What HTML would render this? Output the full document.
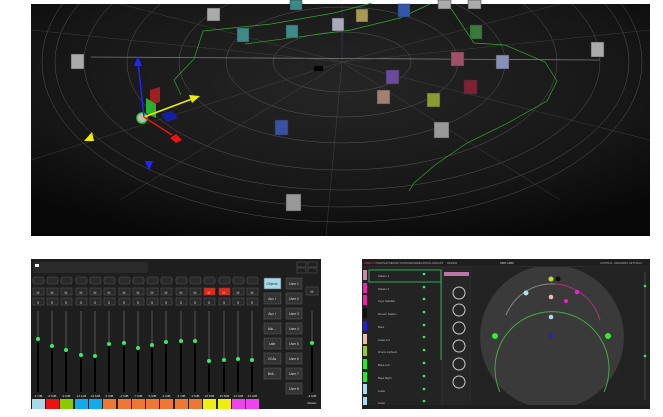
<!DOCTYPE html>
<html><head><meta charset="utf-8"><style>
html,body{margin:0;padding:0;background:#fff;width:663px;height:417px;overflow:hidden;font-family:"Liberation Sans",sans-serif}
svg{position:absolute;left:0;top:0}
</style></head><body>
<svg width="663" height="417" viewBox="0 0 663 417" xmlns="http://www.w3.org/2000/svg" font-family="Liberation Sans, sans-serif">
<defs>
<radialGradient id="bg" cx="0.5" cy="0.35" r="0.7">
<stop offset="0" stop-color="#252525"/><stop offset="0.7" stop-color="#161616"/><stop offset="1" stop-color="#080808"/>
</radialGradient>
<clipPath id="sc"><rect x="31" y="4" width="619" height="232"/></clipPath>
<clipPath id="rp"><rect x="471" y="267" width="179" height="138"/></clipPath>
</defs>
<rect x="31" y="4" width="619" height="232" fill="url(#bg)"/>
<g clip-path="url(#sc)" fill="none" stroke="#777" stroke-width="0.5" opacity="0.65">
<ellipse cx="342" cy="62" rx="69" ry="30"/>
<ellipse cx="342" cy="62" rx="116" ry="55"/>
<ellipse cx="342" cy="62" rx="163" ry="81"/>
<ellipse cx="342" cy="62" rx="215" ry="108"/>
<ellipse cx="342" cy="62" rx="258" ry="128"/>
<ellipse cx="342" cy="62" rx="287" ry="145"/>
<ellipse cx="342" cy="62" rx="300" ry="160"/>
<g stroke="#555">
<line x1="342" y1="62" x2="31" y2="160"/><line x1="342" y1="62" x2="120" y2="200"/>
<line x1="342" y1="62" x2="326" y2="236"/><line x1="342" y1="62" x2="560" y2="200"/>
<line x1="342" y1="62" x2="650" y2="140"/><line x1="342" y1="62" x2="650" y2="30"/>
<line x1="342" y1="62" x2="560" y2="4"/><line x1="342" y1="62" x2="120" y2="4"/>
<line x1="342" y1="62" x2="31" y2="30"/></g><line x1="342" y1="62" x2="342" y2="4" stroke="#4455aa"/>
<line x1="91" y1="57" x2="600" y2="60" stroke="#aaa" stroke-width="0.8"/>
</g>
<g fill="none" stroke="#2faa2f" stroke-width="0.7">
<polyline points="203,31 271,24 334,13 372,3"/>
<polyline points="245,44 351,30 400,18 430,4"/>
<polyline points="203,31 194,59 174,80 181,95"/>
<polyline points="450,7 474,43 505,45 545,62 557,81 547,101 506,124 467,143 435,165 414,183 409,191"/>
</g>
<rect x="314" y="66" width="9" height="5" fill="#000"/>
<g stroke="#333" stroke-width="0.5">
<rect x="207" y="8" width="13" height="13" fill="#aaa"/>
<rect x="290" y="0" width="12" height="10" fill="#3d8a88"/>
<rect x="356" y="9" width="12" height="13" fill="#a89a50"/>
<rect x="398" y="4" width="12" height="13" fill="#3356aa"/>
<rect x="438" y="0" width="13" height="9" fill="#aaa"/>
<rect x="468" y="0" width="13" height="9" fill="#aaa"/>
<rect x="237" y="28" width="12" height="14" fill="#3d8a88"/>
<rect x="286" y="25" width="12" height="13" fill="#3d8a88"/>
<rect x="332" y="18" width="12" height="13" fill="#aab"/>
<rect x="470" y="25" width="12" height="14" fill="#3a7a3a"/>
<rect x="71" y="54" width="13" height="15" fill="#aaa"/>
<rect x="591" y="42" width="13" height="15" fill="#aaa"/>
<rect x="451" y="52" width="13" height="14" fill="#a05068"/>
<rect x="496" y="55" width="13" height="14" fill="#8890b8"/>
<rect x="386" y="70" width="13" height="14" fill="#6a4a9a"/>
<rect x="464" y="80" width="13" height="14" fill="#802035"/>
<rect x="377" y="90" width="13" height="14" fill="#a08070"/>
<rect x="427" y="93" width="13" height="14" fill="#8a9a30"/>
<rect x="275" y="120" width="13" height="15" fill="#3a50a0"/>
<rect x="434" y="122" width="15" height="16" fill="#999"/>
<rect x="286" y="194" width="15" height="17" fill="#999"/>
</g>
<polygon points="150,90 160,87 160,102 150,105" fill="#a02020"/>
<polygon points="146,98 156,104 156,118 146,113" fill="#2ab02a"/>
<polygon points="161,114 172,111 178,118 167,122" fill="#1520a0"/>
<circle cx="142" cy="118" r="5" fill="#bbb" stroke="#3c3" stroke-width="1.5"/>
<line x1="144" y1="117" x2="138" y2="62" stroke="#22f" stroke-width="1.5"/>
<polygon points="138,56 134,66 142,66" fill="#22f"/>
<line x1="144" y1="117" x2="192" y2="99" stroke="#ee0" stroke-width="1.5"/>
<polygon points="200,96 189,95 192,103" fill="#ee0"/>
<line x1="144" y1="117" x2="172" y2="135" stroke="#e11" stroke-width="1.5"/>
<polygon points="176,134 182,140 176,143 170,138" fill="#e11"/>
<polygon points="84,141 94,141 92,132" fill="#ee0"/>
<polygon points="145,161 153,161 149,171" fill="#22f"/>

<!-- MIXER -->
<rect x="31" y="259" width="290" height="150" fill="#1e1e1e"/>
<rect x="33" y="262" width="115" height="11" fill="#2a2a2a" rx="2"/>
<rect x="35" y="264" width="4" height="3" fill="#fff"/>
<g fill="none" stroke="#555" stroke-width="0.6">
<rect x="297" y="262" width="9" height="5"/><rect x="308" y="262" width="9" height="5"/>
<rect x="297" y="268" width="9" height="5"/><rect x="308" y="268" width="9" height="5"/>
</g>
<g stroke="#555" stroke-width="0.6" fill="#2a2a2a">
<rect x="33" y="277" width="11" height="7" rx="2"/><rect x="47" y="277" width="11" height="7" rx="2"/><rect x="61" y="277" width="11" height="7" rx="2"/><rect x="76" y="277" width="11" height="7" rx="2"/><rect x="90" y="277" width="11" height="7" rx="2"/><rect x="104" y="277" width="11" height="7" rx="2"/><rect x="119" y="277" width="11" height="7" rx="2"/><rect x="133" y="277" width="11" height="7" rx="2"/><rect x="147" y="277" width="11" height="7" rx="2"/><rect x="161" y="277" width="11" height="7" rx="2"/><rect x="176" y="277" width="11" height="7" rx="2"/><rect x="190" y="277" width="11" height="7" rx="2"/><rect x="204" y="277" width="11" height="7" rx="2"/><rect x="219" y="277" width="11" height="7" rx="2"/><rect x="233" y="277" width="11" height="7" rx="2"/><rect x="247" y="277" width="11" height="7" rx="2"/>
<rect x="33" y="288" width="11" height="7"/><rect x="47" y="288" width="11" height="7"/><rect x="61" y="288" width="11" height="7"/><rect x="76" y="288" width="11" height="7"/><rect x="90" y="288" width="11" height="7"/><rect x="104" y="288" width="11" height="7"/><rect x="119" y="288" width="11" height="7"/><rect x="133" y="288" width="11" height="7"/><rect x="147" y="288" width="11" height="7"/><rect x="161" y="288" width="11" height="7"/><rect x="176" y="288" width="11" height="7"/><rect x="190" y="288" width="11" height="7"/><rect x="204" y="288" width="11" height="7" fill="#e21"/><rect x="219" y="288" width="11" height="7" fill="#e21"/><rect x="233" y="288" width="11" height="7"/><rect x="247" y="288" width="11" height="7"/>
<rect x="33" y="298" width="11" height="7"/><rect x="47" y="298" width="11" height="7"/><rect x="61" y="298" width="11" height="7"/><rect x="76" y="298" width="11" height="7"/><rect x="90" y="298" width="11" height="7"/><rect x="104" y="298" width="11" height="7"/><rect x="119" y="298" width="11" height="7"/><rect x="133" y="298" width="11" height="7"/><rect x="147" y="298" width="11" height="7"/><rect x="161" y="298" width="11" height="7"/><rect x="176" y="298" width="11" height="7"/><rect x="190" y="298" width="11" height="7"/><rect x="204" y="298" width="11" height="7"/><rect x="219" y="298" width="11" height="7"/><rect x="233" y="298" width="11" height="7"/><rect x="247" y="298" width="11" height="7"/>
<rect x="306" y="287" width="12" height="8"/>
</g>
<g fill="#ccc" font-size="3.5" text-anchor="middle">
<text x="38" y="294">M</text><text x="52" y="294">M</text><text x="66" y="294">M</text><text x="81" y="294">M</text><text x="95" y="294">M</text><text x="109" y="294">M</text><text x="124" y="294">M</text><text x="138" y="294">M</text><text x="152" y="294">M</text><text x="166" y="294">M</text><text x="181" y="294">M</text><text x="195" y="294">M</text><text x="209" y="294">M</text><text x="224" y="294">M</text><text x="238" y="294">M</text><text x="252" y="294">M</text><text x="312" y="293">M</text>
<text x="38" y="304">S</text><text x="52" y="304">S</text><text x="66" y="304">S</text><text x="81" y="304">S</text><text x="95" y="304">S</text><text x="109" y="304">S</text><text x="124" y="304">S</text><text x="138" y="304">S</text><text x="152" y="304">S</text><text x="166" y="304">S</text><text x="181" y="304">S</text><text x="195" y="304">S</text><text x="209" y="304">S</text><text x="224" y="304">S</text><text x="238" y="304">S</text><text x="252" y="304">S</text>
</g>
<g stroke="#3a3a3a" stroke-width="2">
<line x1="38" y1="311" x2="38" y2="392"/><line x1="52" y1="311" x2="52" y2="392"/><line x1="66" y1="311" x2="66" y2="392"/><line x1="81" y1="311" x2="81" y2="392"/><line x1="95" y1="311" x2="95" y2="392"/><line x1="109" y1="311" x2="109" y2="392"/><line x1="124" y1="311" x2="124" y2="392"/><line x1="138" y1="311" x2="138" y2="392"/><line x1="152" y1="311" x2="152" y2="392"/><line x1="166" y1="311" x2="166" y2="392"/><line x1="181" y1="311" x2="181" y2="392"/><line x1="195" y1="311" x2="195" y2="392"/><line x1="209" y1="311" x2="209" y2="392"/><line x1="224" y1="311" x2="224" y2="392"/><line x1="238" y1="311" x2="238" y2="392"/><line x1="252" y1="311" x2="252" y2="392"/><line x1="312" y1="311" x2="312" y2="392"/>
</g>
<g stroke="#000" stroke-width="2">
<line x1="38" y1="339" x2="38" y2="392"/><line x1="52" y1="346" x2="52" y2="392"/><line x1="66" y1="350" x2="66" y2="392"/><line x1="81" y1="355" x2="81" y2="392"/><line x1="95" y1="356" x2="95" y2="392"/><line x1="109" y1="344" x2="109" y2="392"/><line x1="124" y1="343" x2="124" y2="392"/><line x1="138" y1="348" x2="138" y2="392"/><line x1="152" y1="345" x2="152" y2="392"/><line x1="166" y1="342" x2="166" y2="392"/><line x1="181" y1="341" x2="181" y2="392"/><line x1="195" y1="341" x2="195" y2="392"/><line x1="209" y1="361" x2="209" y2="392"/><line x1="224" y1="360" x2="224" y2="392"/><line x1="238" y1="359" x2="238" y2="392"/><line x1="252" y1="360" x2="252" y2="392"/><line x1="312" y1="343" x2="312" y2="392"/>
</g>
<g fill="#3e6">
<circle cx="38" cy="339" r="2"/><circle cx="52" cy="346" r="2"/><circle cx="66" cy="350" r="2"/><circle cx="81" cy="355" r="2"/><circle cx="95" cy="356" r="2"/><circle cx="109" cy="344" r="2"/><circle cx="124" cy="343" r="2"/><circle cx="138" cy="348" r="2"/><circle cx="152" cy="345" r="2"/><circle cx="166" cy="342" r="2"/><circle cx="181" cy="341" r="2"/><circle cx="195" cy="341" r="2"/><circle cx="209" cy="361" r="2"/><circle cx="224" cy="360" r="2"/><circle cx="238" cy="359" r="2"/><circle cx="252" cy="360" r="2"/><circle cx="312" cy="343" r="2"/>
</g>
<g fill="#ddd" font-size="3" text-anchor="middle">
<text x="38" y="397">-2.7dB</text><text x="52" y="397">-6.5dB</text><text x="66" y="397">-9.0dB</text><text x="81" y="397">-12.1dB</text><text x="95" y="397">-13.6dB</text><text x="109" y="397">-5.0dB</text><text x="124" y="397">-4.5dB</text><text x="138" y="397">-7.6dB</text><text x="152" y="397">-5.9dB</text><text x="166" y="397">-4.2dB</text><text x="181" y="397">-3.7dB</text><text x="195" y="397">-3.5dB</text><text x="209" y="397">-16.5dB</text><text x="224" y="397">-15.8dB</text><text x="238" y="397">-14.5dB</text><text x="252" y="397">-15.4dB</text><text x="312" y="397">-4.6dB</text><text x="312" y="404">Master</text>
</g>
<g>
<rect x="32" y="399" width="13" height="10" fill="#a8d8e8"/><rect x="46" y="399" width="13" height="10" fill="#e11"/><rect x="60" y="399" width="13" height="10" fill="#8c0"/><rect x="75" y="399" width="13" height="10" fill="#1ae"/><rect x="89" y="399" width="13" height="10" fill="#1ae"/><rect x="103" y="399" width="13" height="10" fill="#e73"/><rect x="118" y="399" width="13" height="10" fill="#e73"/><rect x="132" y="399" width="13" height="10" fill="#e73"/><rect x="146" y="399" width="13" height="10" fill="#e73"/><rect x="160" y="399" width="13" height="10" fill="#e73"/><rect x="175" y="399" width="13" height="10" fill="#e73"/><rect x="189" y="399" width="13" height="10" fill="#e73"/><rect x="203" y="399" width="13" height="10" fill="#ee1"/><rect x="218" y="399" width="13" height="10" fill="#ee1"/><rect x="232" y="399" width="13" height="10" fill="#e4e"/><rect x="246" y="399" width="13" height="10" fill="#e4e"/>
</g>
<g fill="#333" stroke="#555" stroke-width="0.6">
<rect x="264" y="278" width="17" height="11" fill="#a8d8e8"/>
<rect x="264" y="293" width="17" height="11"/><rect x="264" y="308" width="17" height="11"/><rect x="264" y="323" width="17" height="11"/><rect x="264" y="338" width="17" height="11"/><rect x="264" y="353" width="17" height="11"/><rect x="264" y="368" width="17" height="11"/>
<rect x="286" y="278" width="16" height="11"/><rect x="286" y="293" width="16" height="11"/><rect x="286" y="308" width="16" height="11"/><rect x="286" y="323" width="16" height="11"/><rect x="286" y="338" width="16" height="11"/><rect x="286" y="353" width="16" height="11"/><rect x="286" y="368" width="16" height="11"/><rect x="286" y="383" width="16" height="11"/>
</g>
<g fill="#ddd" font-size="3.3" text-anchor="middle">
<text x="272" y="285" fill="#234">Objects</text><text x="272" y="300">Aux I</text><text x="272" y="315">Aux I</text><text x="272" y="330">Mic...</text><text x="272" y="345">Late</text><text x="272" y="360">VCAs</text><text x="272" y="375">Bell...</text>
<text x="294" y="285">User 1</text><text x="294" y="300">User 2</text><text x="294" y="315">User 3</text><text x="294" y="330">User 4</text><text x="294" y="345">User 5</text><text x="294" y="360">User 6</text><text x="294" y="375">User 7</text><text x="294" y="390">User 8</text>
</g>

<!-- RIGHT PANEL -->
<rect x="362" y="259" width="288" height="149" fill="#2b2b2b"/>
<rect x="362" y="259" width="288" height="7" fill="#1e1e1e"/>
<g fill="#aaa" font-size="2.6">
<text x="364" y="264" fill="#e44">OBJECTS</text><text x="376" y="264">SNAPSHOTS</text><text x="391" y="264">EFFECTS</text><text x="403" y="264">PROCESSING</text><text x="419" y="264">CONTROL</text><text x="432" y="264">GROUPS</text><text x="447" y="264">REVIEW</text>
<text x="500" y="264" fill="#ddd">SPAT LABS</text>
<text x="600" y="264">CONTROL</text><text x="614" y="264">SPEAKERS</text><text x="629" y="264">SETTINGS</text>
</g>
<rect x="362" y="267" width="79" height="138" fill="#232323"/>
<g>
<rect x="363" y="270" width="4" height="10" fill="#c8a"/><rect x="363" y="283" width="4" height="10" fill="#e2a"/><rect x="363" y="295" width="4" height="10" fill="#e2a"/><rect x="363" y="308" width="4" height="10" fill="#111"/><rect x="363" y="321" width="4" height="10" fill="#22c"/><rect x="363" y="334" width="4" height="10" fill="#eba"/><rect x="363" y="346" width="4" height="10" fill="#9c2"/><rect x="363" y="359" width="4" height="10" fill="#2e2"/><rect x="363" y="372" width="4" height="10" fill="#2e2"/><rect x="363" y="384" width="4" height="10" fill="#ade"/><rect x="363" y="397" width="4" height="8" fill="#ade"/>
</g>
<rect x="369" y="270" width="72" height="12" fill="none" stroke="#3c6" stroke-width="0.8"/>
<line x1="441" y1="270" x2="441" y2="360" stroke="#3c6" stroke-width="0.8"/>
<g fill="#3e6"><circle cx="424" cy="274" r="1.3"/><circle cx="424" cy="287" r="1.3"/><circle cx="424" cy="299" r="1.3"/><circle cx="424" cy="312" r="1.3"/><circle cx="424" cy="325" r="1.3"/><circle cx="424" cy="337" r="1.3"/><circle cx="424" cy="350" r="1.3"/><circle cx="424" cy="363" r="1.3"/><circle cx="424" cy="376" r="1.3"/><circle cx="424" cy="389" r="1.3"/><circle cx="424" cy="401" r="1.3"/></g>
<g fill="#bbb" font-size="2.8"><text x="378" y="277">Station 1</text><text x="378" y="290">Station 2</text><text x="378" y="302">Keys Satellite</text><text x="378" y="315">Reverb Station</text><text x="378" y="328">Bass</text><text x="378" y="341">Audio 3.0</text><text x="378" y="353">Drums Ambient</text><text x="378" y="366">Bass Left</text><text x="378" y="379">Bass Right</text><text x="378" y="392">Audio</text><text x="378" y="404">Audio</text></g>
<rect x="443" y="267" width="27" height="138" fill="#262626"/>
<rect x="444" y="272" width="25" height="4" fill="#b7a"/>
<g fill="none" stroke="#ccc" stroke-width="1"><circle cx="459" cy="293" r="6"/><circle cx="459" cy="310" r="6"/><circle cx="459" cy="328" r="6"/><circle cx="459" cy="346" r="6"/><circle cx="459" cy="364" r="6"/><circle cx="459" cy="382" r="6"/></g>
<rect x="471" y="267" width="179" height="138" fill="#222"/>
<g clip-path="url(#rp)">
<circle cx="552" cy="337" r="72" fill="#3a3a3a"/>
</g>
<path d="M500,392 A57,57 0 1 1 604,392" fill="none" stroke="#4a4" stroke-width="1"/>
<path d="M506,315 A50,50 0 0 1 555,284" fill="none" stroke="#888" stroke-width="1"/>
<path d="M555,284 A50,50 0 0 1 600,320" fill="none" stroke="#a37" stroke-width="1"/>
<circle cx="495" cy="336" r="3" fill="#3e3"/><circle cx="608" cy="336" r="3" fill="#3e3"/>
<circle cx="551" cy="279" r="2.5" fill="#bd3"/><circle cx="558" cy="279" r="2.5" fill="#111"/>
<circle cx="526" cy="293" r="2.5" fill="#ade"/><circle cx="551" cy="297" r="2.3" fill="#eba"/>
<circle cx="577" cy="292" r="2.3" fill="#e2c"/><circle cx="566" cy="301" r="2" fill="#e2c"/>
<circle cx="551" cy="317" r="2.3" fill="#ade"/><circle cx="551" cy="336" r="2" fill="#22c"/>
<line x1="645" y1="272" x2="645" y2="400" stroke="#444" stroke-width="1"/>
<circle cx="645" cy="286" r="1.3" fill="#3e6"/><circle cx="645" cy="356" r="1.3" fill="#3e6"/>
<rect x="362" y="405" width="288" height="4" fill="#1e1e1e"/>
</svg>
</body></html>
